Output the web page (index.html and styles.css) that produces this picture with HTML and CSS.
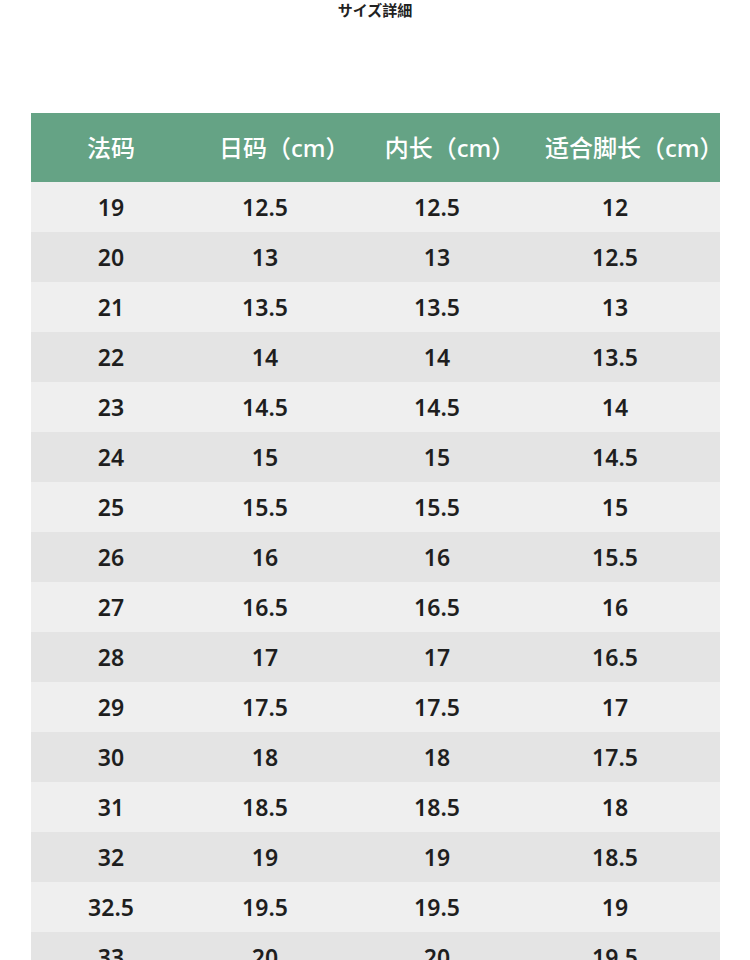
FILE: index.html
```html
<!DOCTYPE html>
<html lang="zh">
<head>
<meta charset="utf-8">
<link rel="stylesheet" href="styles.css">
</head>
<body>
<div class="page">
  <h1 class="title">サイズ詳細</h1>
  <div class="table">
    <div class="row head">
      <div class="cell">法码</div>
      <div class="cell">日码（cm）</div>
      <div class="cell">内长（cm）</div>
      <div class="cell">适合脚长（cm）</div>
    </div>
    <div class="row"><div class="cell">19</div><div class="cell">12.5</div><div class="cell">12.5</div><div class="cell">12</div></div>
    <div class="row"><div class="cell">20</div><div class="cell">13</div><div class="cell">13</div><div class="cell">12.5</div></div>
    <div class="row"><div class="cell">21</div><div class="cell">13.5</div><div class="cell">13.5</div><div class="cell">13</div></div>
    <div class="row"><div class="cell">22</div><div class="cell">14</div><div class="cell">14</div><div class="cell">13.5</div></div>
    <div class="row"><div class="cell">23</div><div class="cell">14.5</div><div class="cell">14.5</div><div class="cell">14</div></div>
    <div class="row"><div class="cell">24</div><div class="cell">15</div><div class="cell">15</div><div class="cell">14.5</div></div>
    <div class="row"><div class="cell">25</div><div class="cell">15.5</div><div class="cell">15.5</div><div class="cell">15</div></div>
    <div class="row"><div class="cell">26</div><div class="cell">16</div><div class="cell">16</div><div class="cell">15.5</div></div>
    <div class="row"><div class="cell">27</div><div class="cell">16.5</div><div class="cell">16.5</div><div class="cell">16</div></div>
    <div class="row"><div class="cell">28</div><div class="cell">17</div><div class="cell">17</div><div class="cell">16.5</div></div>
    <div class="row"><div class="cell">29</div><div class="cell">17.5</div><div class="cell">17.5</div><div class="cell">17</div></div>
    <div class="row"><div class="cell">30</div><div class="cell">18</div><div class="cell">18</div><div class="cell">17.5</div></div>
    <div class="row"><div class="cell">31</div><div class="cell">18.5</div><div class="cell">18.5</div><div class="cell">18</div></div>
    <div class="row"><div class="cell">32</div><div class="cell">19</div><div class="cell">19</div><div class="cell">18.5</div></div>
    <div class="row"><div class="cell">32.5</div><div class="cell">19.5</div><div class="cell">19.5</div><div class="cell">19</div></div>
    <div class="row"><div class="cell">33</div><div class="cell">20</div><div class="cell">20</div><div class="cell">19.5</div></div>
  </div>
</div>
</body>
</html>
```
FILE: styles.css
```css
* { box-sizing: border-box; }
html, body {
  margin: 0;
  padding: 0;
  background: #ffffff;
}
body {
  font-family: "Noto Sans", "Noto Sans CJK SC", sans-serif;
  color: #1e1e1e;
  overflow: hidden;
}
.page {
  width: 750px;
  height: 960px;
  overflow: hidden;
}
.title {
  margin: 0;
  height: 20px;
  font-family: "Noto Sans CJK JP", sans-serif;
  font-size: 15px;
  line-height: 20px;
  font-weight: 700;
  text-align: center;
  color: #222;
}
.table {
  margin: 93px 0 0 31px;
  width: 689px;
}
.row {
  display: grid;
  grid-template-columns: 160px 148px 196px 185px;
  height: 50px;
  align-items: center;
  background: #efefef;
}
.row:nth-child(odd) {
  background: #e4e4e4;
}
.row.head {
  height: 69px;
  background: #65a385;
  color: #ffffff;
}
.cell {
  text-align: center;
  font-size: 23px;
  line-height: 30px;
  font-weight: 600;
  white-space: nowrap;
}
.cell:nth-child(4) { padding-right: 25px; }
.head .cell {
  font-size: 24px;
  font-weight: 500;
}
.head .cell:nth-child(2) { padding-left: 28px; }
.head .cell:nth-child(3) { padding-left: 26px; }
.head .cell:nth-child(4) { padding-left: 10px; padding-right: 0; }
```
